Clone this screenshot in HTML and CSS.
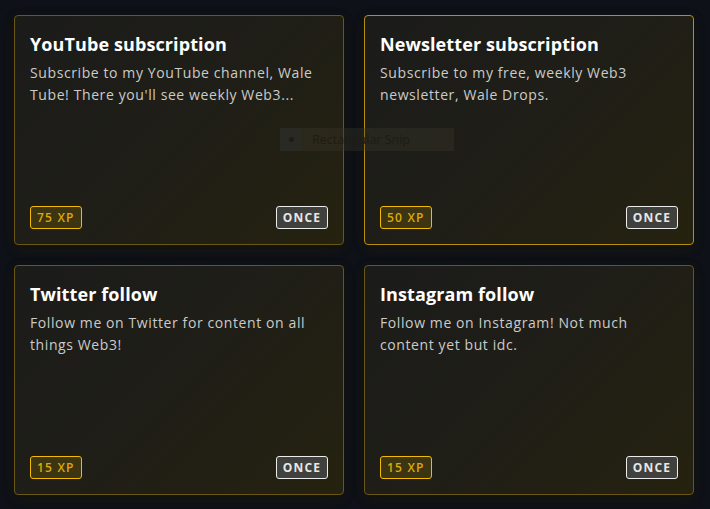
FILE: index.html
```html
<!DOCTYPE html>
<html lang="en">
<head>
<meta charset="utf-8">
<link rel="stylesheet" href="styles.css">
</head>
<body>
<main class="grid">
  <article class="card">
    <div class="card-body">
      <h2 class="title">YouTube subscription</h2>
      <p class="desc">Subscribe to my YouTube channel, Wale Tube! There you'll see weekly Web3...</p>
    </div>
    <div class="card-foot">
      <span class="badge xp">75 XP</span>
      <span class="badge once">ONCE</span>
    </div>
  </article>
  <article class="card active">
    <div class="card-body">
      <h2 class="title">Newsletter subscription</h2>
      <p class="desc">Subscribe to my free, weekly Web3 newsletter, Wale Drops.</p>
    </div>
    <div class="card-foot">
      <span class="badge xp">50 XP</span>
      <span class="badge once">ONCE</span>
    </div>
  </article>
  <article class="card">
    <div class="card-body">
      <h2 class="title">Twitter follow</h2>
      <p class="desc">Follow me on Twitter for content on all things Web3!</p>
    </div>
    <div class="card-foot">
      <span class="badge xp">15 XP</span>
      <span class="badge once">ONCE</span>
    </div>
  </article>
  <article class="card">
    <div class="card-body">
      <h2 class="title">Instagram follow</h2>
      <p class="desc">Follow me on Instagram! Not much content yet but idc.</p>
    </div>
    <div class="card-foot">
      <span class="badge xp">15 XP</span>
      <span class="badge once">ONCE</span>
    </div>
  </article>
</main>
<div class="snip"><span class="snip-icon"><span class="snip-dot"></span></span><span class="snip-label">Rectangular Snip</span></div>
</body>
</html>
```
FILE: styles.css
```css
* { box-sizing: border-box; }
html, body { margin: 0; padding: 0; }
body {
  background: #0e1117;
  font-family: "Open Sans", "DejaVu Sans", sans-serif;
  width: 710px;
  height: 509px;
  overflow: hidden;
}
.grid {
  display: grid;
  grid-template-columns: 330px 330px;
  grid-auto-rows: 230px;
  column-gap: 20px;
  row-gap: 20px;
  padding: 15px 16px 0 14px;
}
.card {
  display: flex;
  flex-direction: column;
  justify-content: space-between;
  border: 1px solid #6a5716;
  border-radius: 4px;
  background: linear-gradient(135deg, #1b1b1a 0%, #1f1e17 50%, #25220f 100%);
  box-shadow: 0 4px 14px rgba(120, 95, 10, 0.12), 0 2px 8px rgba(0, 0, 0, 0.4);
  padding: 15px 15px 15px 15px;
}
.card.active { border-color: #b78f0e; }
.title {
  margin: 0;
  color: #ffffff;
  font-size: 18px;
  font-weight: 700;
  line-height: 26px;
  letter-spacing: 0.1px;
}
.desc {
  margin: 5px 0 0;
  color: #cbcbc9;
  font-size: 14px;
  line-height: 22px;
  letter-spacing: 0.6px;
}
.card-foot {
  display: flex;
  justify-content: space-between;
  align-items: center;
}
.badge {
  display: inline-flex;
  align-items: center;
  justify-content: center;
  height: 23px;
  padding: 0 6px;
  border-radius: 3px;
  font-size: 12px;
  font-weight: 700;
  letter-spacing: 1.2px;
}
.xp {
  border: 1px solid #f2bb00;
  background: #3d3412;
  color: #dcaa07;
  font-weight: 600;
}
.once {
  border: 1px solid #ececec;
  background: #40403d;
  color: #e8e8e8;
  width: 52px;
}
.snip {
  position: absolute;
  left: 280px;
  top: 128px;
  width: 174px;
  height: 23px;
  display: flex;
  align-items: center;
  background: rgba(60, 58, 45, 0.35);
  font-family: "Open Sans", sans-serif;
}
.snip-icon {
  width: 22px;
  height: 23px;
  display: flex;
  align-items: center;
  justify-content: center;
  background: rgba(40, 45, 50, 0.35);
}
.snip-dot {
  width: 5px;
  height: 5px;
  border-radius: 50%;
  background: #1f1d12;
}
.snip-label {
  margin-left: 10px;
  font-size: 12.5px;
  color: #1e1c12;
}
```
